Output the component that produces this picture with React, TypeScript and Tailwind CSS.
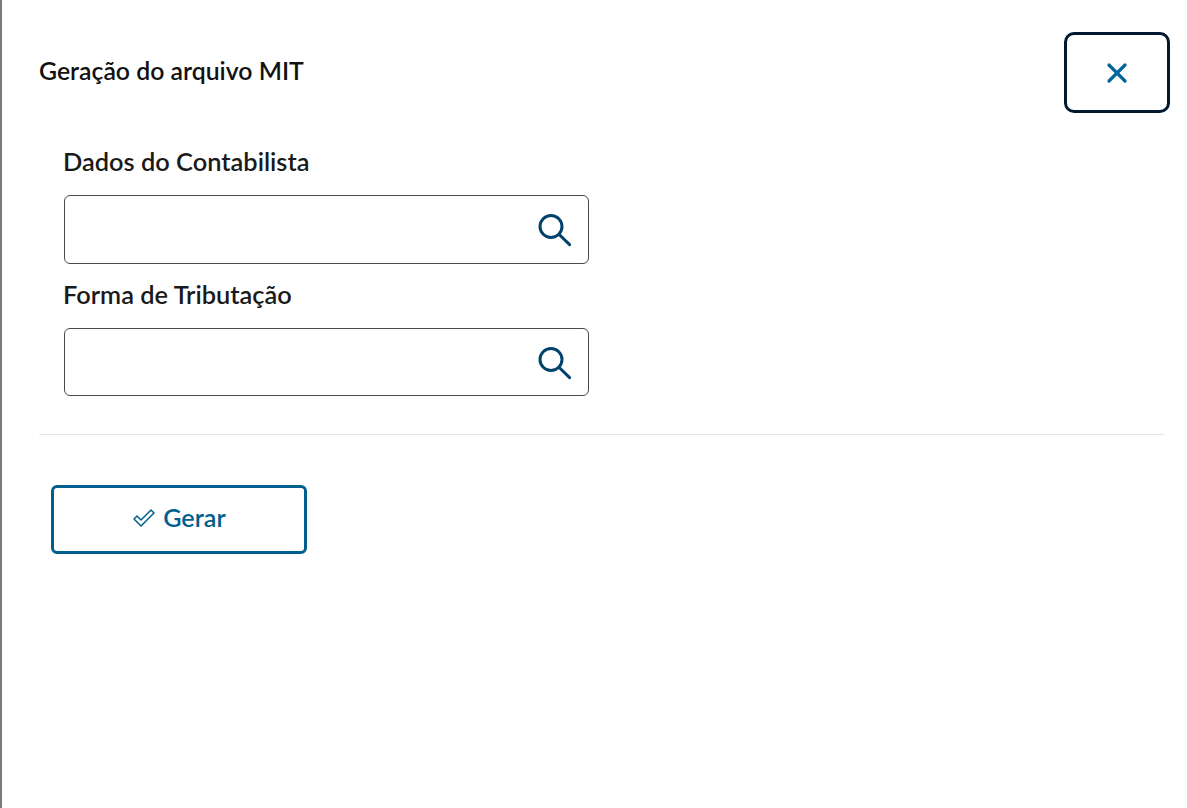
import { X } from 'lucide-react';

function SearchIcon() {
  return (
    <svg width="36" height="36" viewBox="0 0 36 36" fill="none" stroke="#00426b" strokeWidth="3" strokeLinecap="round">
      <circle cx="15" cy="15.5" r="11" />
      <path d="M23.2 23.5 L33.6 33.6" />
    </svg>
  );
}

function SearchField({ label }: { label: string }) {
  return (
    <div className="flex flex-col">
      <div className="h-[64px] pt-[14px] -ml-[1px] text-[25.4px] leading-[32px] font-semibold text-[#1a1a1a]">{label}</div>
      <div className="w-[525px] h-[68.5px] border border-[#4a4a4a] rounded-[6px] flex items-center justify-end pr-[16px]">
        <SearchIcon />
      </div>
    </div>
  );
}

export default function App() {
  return (
    <div className="w-[1187px] h-[808px] bg-white border-l-2 border-[#7a7a7a] overflow-hidden font-['Lato','Noto_Sans',sans-serif]">
      {/* Header */}
      <div className="flex items-start justify-between pl-[37px] pr-[17px] pt-[32px]">
        <h1 className="mt-[23px] text-[24.8px] leading-[32px] font-semibold text-[#111]">Geração do arquivo MIT</h1>
        <button className="w-[106px] h-[81px] border-[3px] border-[#00192e] rounded-[10px] flex items-center justify-center">
          <X size={32} strokeWidth={2.4} className="text-[#00659c]" />
        </button>
      </div>

      {/* Fields */}
      <div className="pl-[62px] mt-[18px]">
        <SearchField label="Dados do Contabilista" />
        <SearchField label="Forma de Tributação" />
      </div>

      <div className="ml-[37px] mr-[23px] mt-[38px] border-t border-[#e6e6e6]" />

      <div className="pl-[49px] mt-[50px]">
        <button className="w-[256px] h-[69px] pb-[3px] border-[3px] border-[#005f8f] rounded-[6px] flex items-center justify-center gap-[7px] text-[25.2px] font-semibold text-[#005f8f]">
          <svg width="24" height="20" viewBox="0 0 24 20" fill="none" stroke="currentColor" strokeWidth="1.5" strokeLinejoin="round">
            <path d="M2 11 L5 8 L9 12 L19 2 L22 5 L9 18 Z" />
          </svg>
          Gerar
        </button>
      </div>
    </div>
  );
}
